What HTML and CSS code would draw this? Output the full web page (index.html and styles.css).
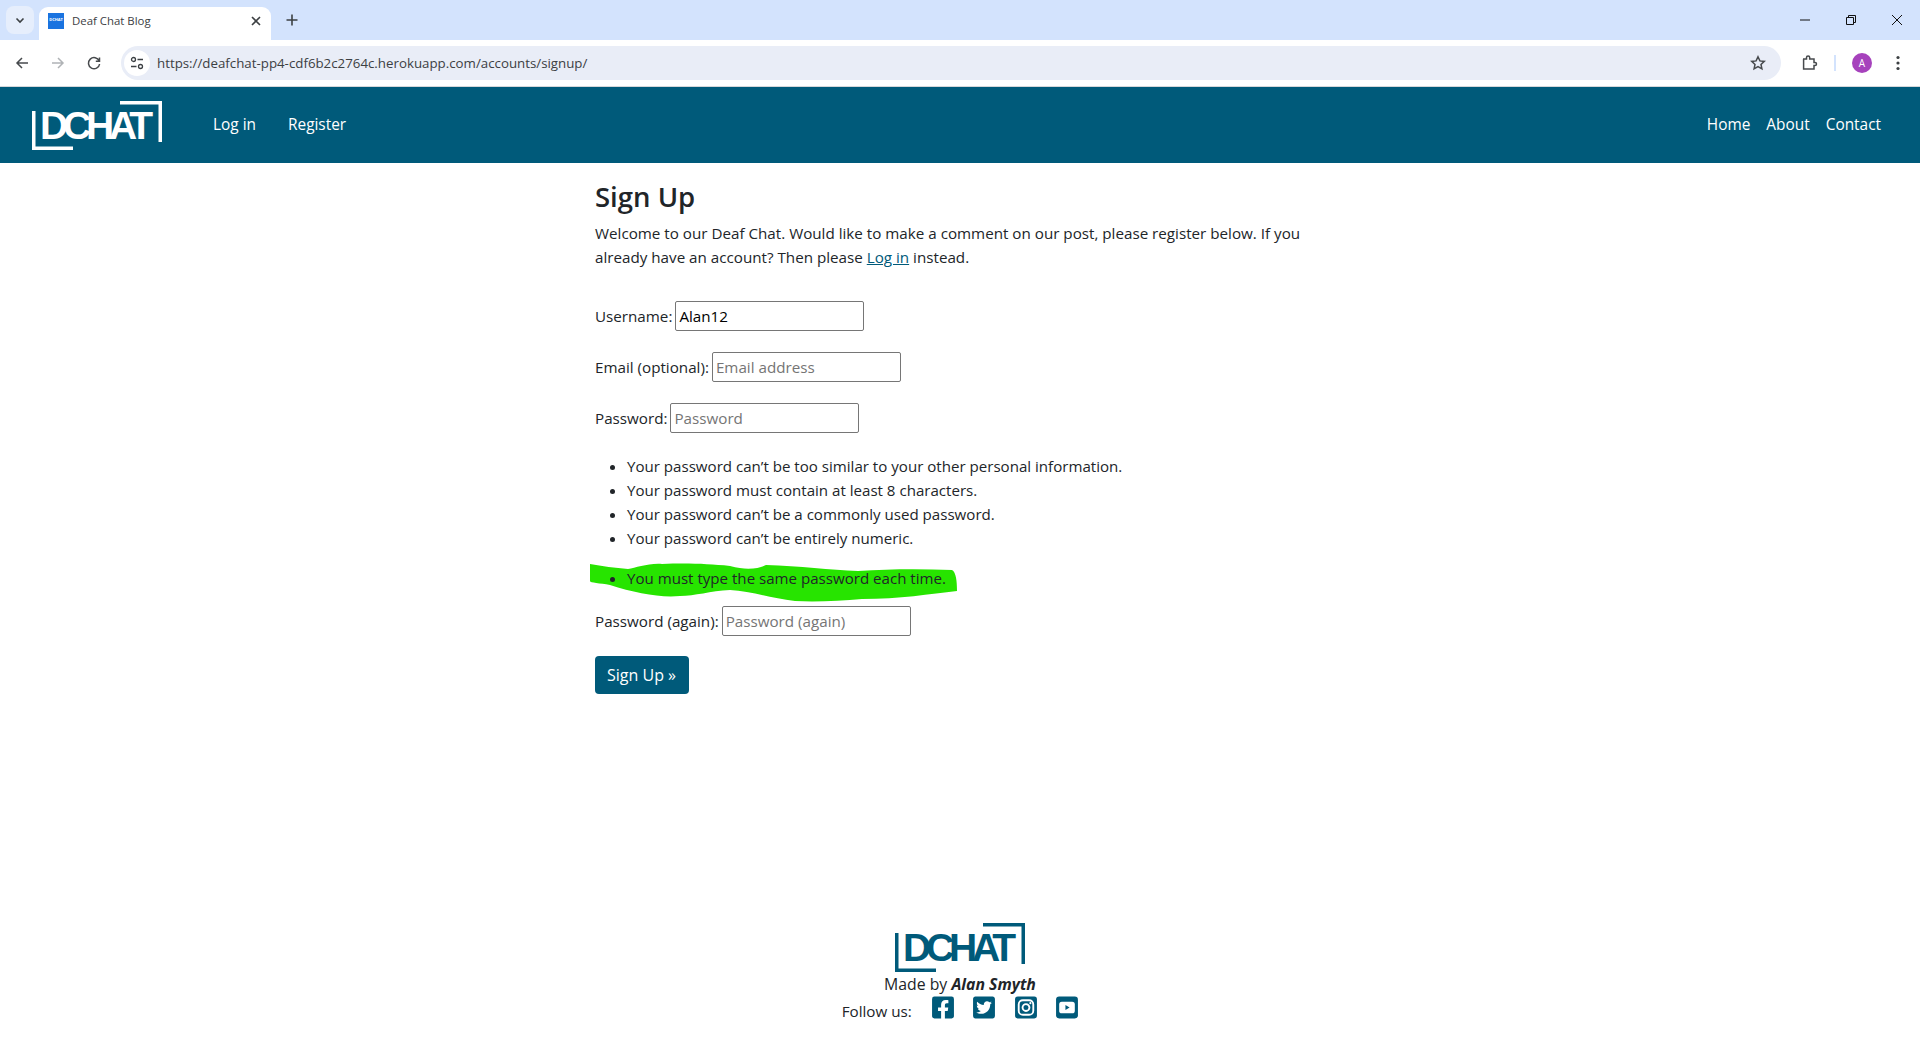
FILE: index.html
```html
<!DOCTYPE html>
<html lang="en">
<head>
<meta charset="utf-8">
<title>Deaf Chat Blog</title>
<link rel="stylesheet" href="styles.css">
</head>
<body>
<div class="tabstrip">
  <div class="tab-search"><svg width="12" height="12" viewBox="0 0 12 12"><path d="M2.5 4.5 6 8l3.5-3.5" class="ico-dark"/></svg></div>
  <div class="tab">
    <span class="favicon">DCHAT</span>
    <span class="tab-title">Deaf Chat Blog</span>
    <svg class="tab-close" width="12" height="12" viewBox="0 0 12 12"><path d="M2 2l8 8M10 2l-8 8" class="ico-dark"/></svg>
  </div>
  <svg class="new-tab" width="14" height="14" viewBox="0 0 14 14"><path d="M7 1.5v11M1.5 7h11" class="ico-dark"/></svg>
  <div class="window-controls">
    <svg width="12" height="12" viewBox="0 0 12 12"><path d="M1 6h10" class="ico-black"/></svg>
    <svg width="12" height="12" viewBox="0 0 12 12"><path d="M1.5 3.5h7v7h-7zM3.5 3.5v-2h7v7h-2" class="ico-black"/></svg>
    <svg width="12" height="12" viewBox="0 0 12 12"><path d="M1 1l10 10M11 1L1 11" class="ico-black"/></svg>
  </div>
</div>
<div class="toolbar">
  <svg class="tool" width="16" height="16" viewBox="0 0 16 16"><path d="M14 8H3M8 3 3 8l5 5" class="ico-tool"/></svg>
  <svg class="tool" width="16" height="16" viewBox="0 0 16 16"><path d="M2 8h11M8 3l5 5-5 5" class="ico-faint"/></svg>
  <svg class="tool" width="16" height="16" viewBox="0 0 16 16"><path d="M13.2 6A5.6 5.6 0 1 0 13.6 9M13.5 2.5V6.2H9.8" class="ico-tool"/></svg>
  <div class="omnibox">
    <span class="site-icon"><svg width="14" height="14" viewBox="0 0 14 14"><circle cx="3.5" cy="3.5" r="2" class="ico-thin"/><path d="M7.5 3.5H13M1 10.5h5.5" class="ico-thin"/><circle cx="10.5" cy="10.5" r="2" class="ico-thin"/></svg></span>
    <span class="url">https://deafchat-pp4-cdf6b2c2764c.herokuapp.com/accounts/signup/</span>
    <svg class="star" width="16" height="16" viewBox="0 0 16 16"><path d="M8 1.8l1.9 4.1 4.4.5-3.3 3 .9 4.4L8 11.6l-3.9 2.2.9-4.4-3.3-3 4.4-.5z" class="ico-tool"/></svg>
  </div>
  <svg class="ext" width="18" height="18" viewBox="0 0 18 18"><path d="M3 5h3.5V3.6a1.6 1.6 0 0 1 3.2 0V5H14v3.5h1a1.5 1.5 0 0 1 0 3h-1V15H3.600V5z" class="ico-tool"/></svg>
  <span class="tool-sep"></span>
  <span class="avatar">A</span>
  <svg class="kebab" width="4" height="16" viewBox="0 0 4 16"><circle cx="2" cy="2.5" r="1.6"/><circle cx="2" cy="8" r="1.6"/><circle cx="2" cy="13.5" r="1.6"/></svg>
</div>

<nav class="navbar">
  <svg class="logo logo-light" width="130" height="49" viewBox="0 0 130 49" role="img" aria-label="DCHAT">
    <path d="M1.750 10v37.250H41M88 1.750h40.250V41" class="logo-frame"/>
    <text x="8" y="38" textLength="113" lengthAdjust="spacing" class="logo-text">DCHAT</text>
  </svg>
  <a class="nav-link nav-first" href="#">Log in</a>
  <a class="nav-link" href="#">Register</a>
  <div class="nav-right">
    <a class="nav-link" href="#">Home</a>
    <a class="nav-link" href="#">About</a>
    <a class="nav-link" href="#">Contact</a>
  </div>
</nav>

<main class="content">
  <h3 class="title">Sign Up</h3>
  <p class="intro">Welcome to our Deaf Chat. Would like to make a comment on our post, please register below. If you already have an account? Then please <a href="#">Log in</a> instead.</p>
  <form class="form">
    <div class="field"><label>Username:</label><input type="text" value="Alan12"></div>
    <div class="field"><label>Email (optional):</label><input type="text" placeholder="Email address"></div>
    <div class="field"><label>Password:</label><input type="password" placeholder="Password"></div>
    <ul class="rules">
      <li>Your password can’t be too similar to your other personal information.</li>
      <li>Your password must contain at least 8 characters.</li>
      <li>Your password can’t be a commonly used password.</li>
      <li>Your password can’t be entirely numeric.</li>
    </ul>
    <div class="error-wrap">
      <svg class="scribble" width="367" height="42" viewBox="0 0 367 42"><path d="M0 1C12 3 25 5 38 6 46 5 58 0 72 1 100 0 118 1 140 3 158 8 170 5 176 2 210 3 240 7 268 8 300 6 330 6 362 7 366 9 367 18 367 28 340 31 310 36 272 36 250 38 225 39 205 38 180 35 160 28 140 27 120 28 105 33 90 33 70 35 45 30 20 22 10 20 0 20 0 18Z"/></svg>
      <ul class="rules rules-error">
        <li>You must type the same password each time.</li>
      </ul>
    </div>
    <div class="field"><label>Password (again):</label><input type="password" placeholder="Password (again)"></div>
    <button class="submit" type="button">Sign Up »</button>
  </form>
</main>

<footer class="footer">
  <svg class="logo logo-dark" width="130" height="49" viewBox="0 0 130 49" role="img" aria-label="DCHAT">
    <path d="M1.750 10v37.250H41M88 1.750h40.250V41" class="logo-frame"/>
    <text x="8" y="38" textLength="113" lengthAdjust="spacing" class="logo-text">DCHAT</text>
  </svg>
  <p class="made">Made by <strong>Alan Smyth</strong></p>
  <div class="follow">
    <span class="follow-label">Follow us:</span>
    <svg class="social" width="22" height="25" viewBox="0 0 448 512"><path d="M400 32H48A48 48 0 0 0 0 80v352a48 48 0 0 0 48 48h137.250V327.690h-63V256h63v-54.640c0-62.150 37-96.480 93.670-96.480 27.140 0 55.520 4.840 55.520 4.840v61h-31.270c-30.810 0-40.420 19.120-40.420 38.730V256h68.780l-11 71.690h-57.780V480H400a48 48 0 0 0 48-48V80a48 48 0 0 0-48-48z"/></svg>
    <svg class="social" width="22" height="25" viewBox="0 0 448 512"><path d="M400 32H48C21.500 32 0 53.500 0 80v352c0 26.500 21.500 48 48 48h352c26.500 0 48-21.500 48-48V80c0-26.500-21.500-48-48-48zm-48.900 158.800c.2 2.800.2 5.700.2 8.500 0 86.700-66 186.600-186.600 186.600-37.200 0-71.700-10.800-100.700-29.400 5.300.6 10.400.8 15.800.8 30.700 0 58.900-10.400 81.400-28-28.800-.6-53-19.500-61.300-45.500 10.100 1.500 19.200 1.500 29.600-1.200-30-6.100-52.500-32.500-52.500-64.400v-.8c8.700 4.900 18.900 7.900 29.600 8.300a65.447 65.447 0 0 1-29.200-54.600c0-12.200 3.200-23.400 8.900-33.100 32.300 39.800 80.800 65.800 135.200 68.600-9.300-44.500 24-80.600 64-80.600 18.900 0 35.900 7.900 47.900 20.700 14.800-2.800 29-8.300 41.600-15.800-4.900 15.200-15.100 28-28.600 36 13.100-1.400 25.800-5 37.600-10.100-8.900 13.100-20.100 24.700-32.900 34z"/></svg>
    <svg class="social" width="22" height="25" viewBox="0 0 21 24"><rect y="1.500" width="21" height="21" rx="2.500"/><rect x="3.500" y="5" width="14" height="14" rx="4" class="insta-line"/><circle cx="10.500" cy="12" r="3.300" class="insta-line"/><circle cx="14.700" cy="7.800" r="1" class="insta-dot"/></svg>
    <svg class="social" width="22" height="25" viewBox="0 0 21 24"><rect y="1.500" width="21" height="21" rx="3"/><rect x="3" y="6.500" width="15" height="11" rx="2.500" class="insta-dot"/><path d="M9 9.500v5l4-2.500z"/></svg>
  </div>
</footer>
</body>
</html>
```

FILE: styles.css
```css
* { box-sizing: border-box; }
html, body { height: 100%; }
body {
  margin: 0;
  display: flex;
  flex-direction: column;
  height: 1040px;
  overflow: hidden;
  background: #fff;
  color: #212529;
  font-family: "Open Sans", "Noto Sans", sans-serif;
  font-size: 15.200px;
  line-height: 24px;
}

/* browser chrome */
.tabstrip {
  display: flex;
  align-items: flex-end;
  flex: 0 0 40px;
  height: 40px;
  background: #d3e3fd;
}
.tab-search {
  display: flex;
  align-items: center;
  justify-content: center;
  width: 28px;
  height: 28px;
  margin: 0 5px 6px 6px;
  border-radius: 8px;
  background: #e6eefc;
}
.tab {
  display: flex;
  align-items: center;
  width: 232px;
  height: 33px;
  padding: 0 9px 6px 9px;
  border-radius: 9px 9px 0 0;
  background: #fff;
}
.favicon {
  display: block;
  flex: none;
  width: 16px;
  height: 16px;
  overflow: hidden;
  background: #1a73e0;
  color: #fff;
  font-size: 4px;
  font-weight: 700;
  line-height: 14px;
  text-align: center;
}
.tab-title {
  flex: 1;
  margin-left: 8px;
  color: #3c4043;
  font-size: 11.400px;
  line-height: 16px;
}
.tab-close { flex: none; }
.new-tab { margin: 0 0 13px 14px; }
.window-controls {
  display: flex;
  gap: 34px;
  margin: 0 17px 14px auto;
}
.ico-dark { fill: none; stroke: #3c4043; stroke-width: 1.600; }
.ico-black { fill: none; stroke: #111; stroke-width: 1; }
.ico-tool { fill: none; stroke: #474a4d; stroke-width: 1.500; }
.ico-faint { fill: none; stroke: #b0b3b6; stroke-width: 1.500; }
.ico-thin { fill: none; stroke: #3c4043; stroke-width: 1.300; }

.toolbar {
  display: flex;
  align-items: center;
  flex: 0 0 47px;
  height: 47px;
  padding-left: 14px;
  border-bottom: 1px solid #d5d7da;
  border-radius: 8px 8px 0 0;
  background: #fff;
}
.tool { flex: none; margin-right: 20px; }
.omnibox {
  display: flex;
  align-items: center;
  width: 1660px;
  height: 34px;
  margin-left: -1px;
  padding: 0 15px 0 3px;
  border-radius: 17px;
  background: #e9edf7;
}
.site-icon {
  display: flex;
  align-items: center;
  justify-content: center;
  width: 26px;
  height: 26px;
  border-radius: 50%;
  background: #fff;
}
.url {
  flex: 1;
  margin-left: 7px;
  color: #3c4043;
  font-size: 13.300px;
}
.star { flex: none; }
.ext { flex: none; margin-left: 19px; }
.tool-sep {
  flex: none;
  width: 2px;
  height: 16px;
  margin-left: 16px;
  background: #d3e3fd;
}
.avatar {
  display: flex;
  flex: none;
  align-items: center;
  justify-content: center;
  width: 20px;
  height: 20px;
  margin-left: 16px;
  border-radius: 50%;
  background: #a642bc;
  color: #fff;
  font-size: 10px;
  line-height: 1;
}
.kebab { flex: none; margin-left: 24px; fill: #3c4043; }

/* site nav */
.navbar {
  display: flex;
  align-items: center;
  flex: 0 0 76px;
  height: 76px;
  padding: 0 39px 0 32px;
  background: #005a7a;
}
.nav-link {
  color: #fff;
  font-size: 15.400px;
  text-decoration: none;
  white-space: nowrap;
}
.nav-first { margin-left: 51px; margin-right: 32px; }
.nav-right { display: flex; gap: 16px; margin-left: auto; }
.logo { display: block; flex: none; overflow: visible; }
.logo-frame { fill: none; stroke-width: 3.500; }
.logo-text {
  font-family: "Liberation Sans", sans-serif;
  font-size: 39px;
  font-weight: 700;
}
.logo-light .logo-frame { stroke: #fff; }
.logo-light .logo-text { fill: #fff; }
.logo-dark .logo-frame { stroke: #005a7a; }
.logo-dark .logo-text { fill: #005a7a; }

/* main */
.content {
  flex: 1;
  width: 732px;
  margin-left: 595px;
}
.title {
  margin: 17px 0 7px;
  font-size: 27.500px;
  font-weight: 600;
  line-height: 34px;
}
.intro { margin: 0; }
.intro a { color: #005a7a; }
.form { margin-top: 32px; }
.field {
  display: flex;
  align-items: center;
  gap: 3px;
  height: 30px;
  margin-bottom: 21px;
}
.field input {
  width: 189px;
  height: 30px;
  padding: 0 3px;
  border: 1px solid #767676;
  border-radius: 2px;
  background: #fff;
  color: #000;
  font: inherit;
}
.field input::placeholder { color: #757575; opacity: 1; }
.rules { margin: 0 0 16px; padding-left: 32px; font-size: 15.100px; }
.error-wrap { position: relative; }
.scribble {
  position: absolute;
  top: -3px;
  left: -5px;
  fill: #27e400;
}
.rules-error { position: relative; }
.submit {
  display: block;
  height: 38px;
  margin-top: -1px;
  padding: 0 13px 0 12px;
  border: 0;
  border-radius: 4px;
  background: #005a7a;
  color: #fff;
  font: inherit;
  font-size: 16px;
}

/* footer */
.footer {
  display: flex;
  flex-direction: column;
  align-items: center;
  flex: none;
  height: 117px;
}
.made { margin: 0; font-size: 15.800px; }
.made strong { font-style: italic; font-weight: 700; }
.follow { display: flex; align-items: center; height: 24px; margin-top: 3px; }
.follow-label { margin-right: 20px; }
.social { display: block; margin: 0 19.500px 7px 0; fill: #005a7a; }
.social:last-child { margin-right: 0; }
.insta-line { fill: none; stroke: #fff; stroke-width: 1.800; }
.insta-dot { fill: #fff; }
```
